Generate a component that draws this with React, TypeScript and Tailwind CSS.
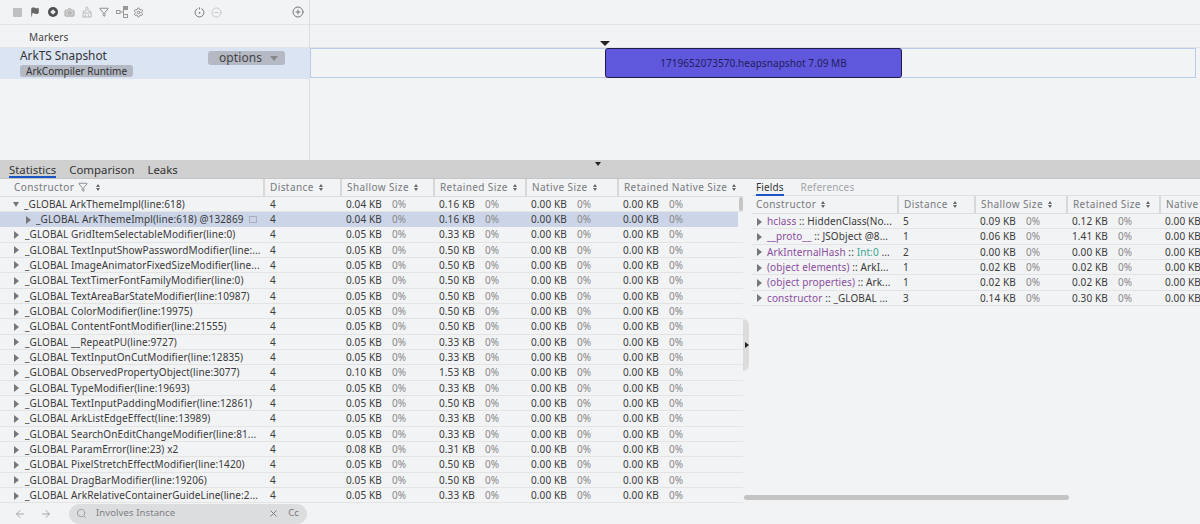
import React from 'react';
import { Camera, CirclePlus, CircleMinus, Funnel, Settings, Search, X, ArrowLeft, ArrowRight, Flag, BrushCleaning } from 'lucide-react';

const leftRows: [string, string, string][] = [
  ['_GLOBAL GridItemSelectableModifier(line:0)', '0.05', '0.33'],
  ['_GLOBAL TextInputShowPasswordModifier(line:...', '0.05', '0.50'],
  ['_GLOBAL ImageAnimatorFixedSizeModifier(line...', '0.05', '0.50'],
  ['_GLOBAL TextTimerFontFamilyModifier(line:0)', '0.05', '0.50'],
  ['_GLOBAL TextAreaBarStateModifier(line:10987)', '0.05', '0.50'],
  ['_GLOBAL ColorModifier(line:19975)', '0.05', '0.50'],
  ['_GLOBAL ContentFontModifier(line:21555)', '0.05', '0.50'],
  ['_GLOBAL __RepeatPU(line:9727)', '0.05', '0.33'],
  ['_GLOBAL TextInputOnCutModifier(line:12835)', '0.05', '0.33'],
  ['_GLOBAL ObservedPropertyObject(line:3077)', '0.10', '1.53'],
  ['_GLOBAL TypeModifier(line:19693)', '0.05', '0.33'],
  ['_GLOBAL TextInputPaddingModifier(line:12861)', '0.05', '0.50'],
  ['_GLOBAL ArkListEdgeEffect(line:13989)', '0.05', '0.33'],
  ['_GLOBAL SearchOnEditChangeModifier(line:81...', '0.05', '0.33'],
  ['_GLOBAL ParamError(line:23) x2', '0.08', '0.31'],
  ['_GLOBAL PixelStretchEffectModifier(line:1420)', '0.05', '0.50'],
  ['_GLOBAL DragBarModifier(line:19206)', '0.05', '0.50'],
  ['_GLOBAL ArkRelativeContainerGuideLine(line:2...', '0.05', '0.33'],
];

const fieldRows = [
  { name: 'hclass', rest: ' :: HiddenClass(No...', dist: '5', shallow: '0.09', retained: '0.12' },
  { name: '__proto__', rest: ' :: JSObject @8...', dist: '1', shallow: '0.06', retained: '1.41' },
  { name: 'ArkInternalHash', rest: ' :: ', teal: 'Int:0', tail: ' ...', dist: '2', shallow: '0.00', retained: '0.00' },
  { name: '(object elements)', rest: ' :: ArkI...', dist: '1', shallow: '0.02', retained: '0.02' },
  { name: '(object properties)', rest: ' :: Ark...', dist: '1', shallow: '0.02', retained: '0.02' },
  { name: 'constructor', rest: ' :: _GLOBAL ...', dist: '3', shallow: '0.14', retained: '0.30' },
];

const leftCols = 'grid grid-cols-[263px_77px_93px_92px_92px_124px]';
const rightCols = 'grid grid-cols-[145px_77px_92px_93px_60px]';

const Arrow = ({ open = false }: { open?: boolean }) => (
  <span
    className={
      open
        ? 'w-0 h-0 border-x-[3.5px] border-x-transparent border-t-[5px] border-t-[#777] shrink-0'
        : 'w-0 h-0 border-y-[4px] border-y-transparent border-l-[5px] border-l-[#777] shrink-0'
    }
  />
);

const Sort = () => (
  <span className="inline-flex flex-col gap-[1px] ml-[5px] align-middle">
    <span className="w-0 h-0 border-x-[2.5px] border-x-transparent border-b-[3px] border-b-[#666]" />
    <span className="w-0 h-0 border-x-[2.5px] border-x-transparent border-t-[3px] border-t-[#666]" />
  </span>
);

const HeadCell = ({ label }: { label: string }) => (
  <div className="flex items-center pl-[5px] border-l-2 border-[#d8d8d8] text-[#77797d] tracking-[0.4px] whitespace-nowrap overflow-hidden">
    {label}
    <Sort />
  </div>
);

const Size = ({ kb }: { kb: string }) => (
  <div className="flex pl-[6px] whitespace-nowrap">
    <span className="w-[37px]">{kb} KB</span>
    <span className="ml-[9px] text-[#888]">0%</span>
  </div>
);

// circular refresh-like record icon
const RecordTimer = () => (
  <svg width="11" height="11" viewBox="0 0 11 11" fill="none" className="ml-[50px] text-[#777]" stroke="currentColor">
    <path d="M3.6 1.6a4.4 4.4 0 1 0 3.8 0" strokeWidth="1" />
    <path d="M5.5 0.4v2" strokeWidth="1" />
    <circle cx="5.5" cy="5.8" r="0.9" fill="currentColor" stroke="none" />
  </svg>
);

// box with a bracket going to two nodes
const TreeIcon = () => (
  <svg width="12" height="12" viewBox="0 0 12 12" fill="none" className="ml-[7px] text-[#999]" stroke="currentColor">
    <rect x="0.5" y="4.5" width="3.5" height="3" />
    <path d="M4 6h3.5M7.5 2.5v7" />
    <rect x="7.5" y="0.5" width="4" height="3" fill="currentColor" />
    <rect x="7.5" y="8.5" width="4" height="3" />
  </svg>
);

export default function App() {
  return (
    <div
      className="w-[1200px] h-[524px] overflow-hidden bg-[#f2f3f5] text-[#3a3a3a] text-[10px] tracking-[0.1px] flex flex-col"
      style={{ fontFamily: '"Noto Sans", "Open Sans", sans-serif' }}
    >
      {/* top session area */}
      <div className="h-[160px] shrink-0 flex flex-col">
        <div className="h-[25px] shrink-0 flex border-b border-[#e2e3e5]">
          <div className="w-[310px] shrink-0 flex items-center pl-[13px] border-r border-[#dcdde0]">
            <span className="w-[9px] h-[9px] rounded-[1px] bg-[#bdbfc2]" />
            <Flag size={10} className="ml-[8px] text-[#666] fill-[#666]" />
            <span className="ml-[8px] w-[10px] h-[10px] rounded-full bg-[#4c4e52] flex items-center justify-center">
              <span className="w-[4px] h-[4px] rotate-45 bg-[#e8e8e8]" />
            </span>
            <Camera size={11} className="ml-[6px] text-[#aaa] fill-[#ccc]" />
            <BrushCleaning size={12} className="ml-[6px] text-[#bbb]" />
            <Funnel size={10} className="ml-[6px] text-[#777]" />
            <TreeIcon />
            <Settings size={11} className="ml-[5px] text-[#888]" />
            <RecordTimer />
            <CircleMinus size={11} className="ml-[6px] text-[#c4c5c8]" />
            <CirclePlus size={12} className="ml-[70px] text-[#777]" />
          </div>
          <div className="flex-1" />
        </div>
        <div className="h-[23px] shrink-0 flex border-b border-[#e2e3e5]">
          <div className="w-[310px] shrink-0 pl-[29px] pt-[2px] flex items-center border-r border-[#dcdde0] text-[#444]">Markers</div>
          <div className="flex-1" />
        </div>
        <div className="h-[31px] shrink-0 flex">
          <div className="w-[310px] shrink-0 bg-[#dbe4f3] pl-[20px] flex">
            <div className="flex-1">
              <div className="text-[11.8px] leading-[15px] text-[#333] tracking-normal">ArkTS Snapshot</div>
              <div className="mt-[2px] w-fit h-[12px] px-[6px] rounded-[3px] bg-[#b4b9c4] leading-[12px] text-[10px] tracking-normal text-[#333]">ArkCompiler Runtime</div>
            </div>
            <div className="mt-[3px] mr-[25px] w-[77px] h-[14px] rounded-[3px] bg-[#b4b9c4] flex items-center pl-[11px] text-[12px] text-[#444]">
              options
              <span className="ml-[8px] w-0 h-0 border-x-[4px] border-x-transparent border-t-[5px] border-t-[#888]" />
            </div>
          </div>
          <div className="flex-1 relative flex items-center border border-[#b9cbe6] mr-[4px] mb-[1px]">
            <div className="ml-[294px] w-[297px] h-[30px] shrink-0 rounded-[3px] bg-[#5f58dc] border border-[#1d1b4d] flex items-center justify-center text-[#1f1d5c] tracking-[0.06px]">
              1719652073570.heapsnapshot 7.09 MB
            </div>
            <span className="absolute left-[289px] -top-[8px] w-0 h-0 border-x-[5px] border-x-transparent border-t-[5px] border-t-[#222]" />
          </div>
        </div>
        <div className="flex-1 flex">
          <div className="w-[310px] border-r border-[#dcdde0]" />
        </div>
      </div>

      {/* tabs bar */}
      <div className="h-[19px] shrink-0 relative flex items-end pl-[9px] gap-[13px] bg-[#d0d0d0] text-[11.4px] tracking-normal text-[#333] border-b border-[#c4c4c4]">
        <div className="h-[18px] leading-[19px] border-b-2 border-[#1a56c4]">Statistics</div>
        <div className="h-[18px] leading-[19px]">Comparison</div>
        <div className="h-[18px] leading-[19px]">Leaks</div>
        <span className="absolute left-[595px] top-[2px] w-0 h-0 border-x-[3.5px] border-x-transparent border-t-[4px] border-t-[#222]" />
      </div>

      <div className="flex-1 min-h-0 flex">
        {/* left table */}
        <div className="w-[743px] shrink-0 flex flex-col relative overflow-hidden">
          <div className={`${leftCols} h-[17.6px] shrink-0 border-b border-[#dddddd] leading-[16px]`}>
            <div className="flex items-center pl-[14px] text-[#77797d] tracking-[0.4px]">
              Constructor
              <Funnel size={10} className="ml-[4px]" />
              <span className="ml-[3px] flex"><Sort /></span>
            </div>
            <HeadCell label="Distance" />
            <HeadCell label="Shallow Size" />
            <HeadCell label="Retained Size" />
            <HeadCell label="Native Size" />
            <HeadCell label="Retained Native Size" />
          </div>
          <div className={`${leftCols} h-[15.35px] shrink-0 items-center border-b border-[#e4e4e4]`}>
            <div className="flex items-center pl-[13px] gap-[5px]"><Arrow open /><span className="truncate">_GLOBAL ArkThemeImpl(line:618)</span></div>
            <div className="pl-[7px]">4</div>
            <Size kb="0.04" />
            <Size kb="0.16" />
            <Size kb="0.00" />
            <Size kb="0.00" />
          </div>
          <div className={`${leftCols} h-[15.35px] shrink-0 items-center bg-[#ccd5e8] mr-[3px] ml-[2px] -translate-x-[2px]`}>
            <div className="flex items-center pl-[26px] gap-[5px] whitespace-nowrap">
              <Arrow />
              <span>_GLOBAL ArkThemeImpl(line:618) @132869</span>
              <span className="w-[8px] h-[7px] border border-[#aab0bd]" />
            </div>
            <div className="pl-[7px]">4</div>
            <Size kb="0.04" />
            <Size kb="0.16" />
            <Size kb="0.00" />
            <Size kb="0.00" />
          </div>
          {leftRows.map(([name, shallow, retained]) => (
            <div key={name} className={`${leftCols} h-[15.35px] shrink-0 items-center border-b border-[#e4e4e4]`}>
              <div className="flex items-center pl-[14px] gap-[6px] whitespace-nowrap overflow-hidden">
                <Arrow />
                <span>{name}</span>
              </div>
              <div className="pl-[7px]">4</div>
              <Size kb={shallow} />
              <Size kb={retained} />
              <Size kb="0.00" />
              <Size kb="0.00" />
            </div>
          ))}
          {/* scrollbar thumb */}
          <span className="absolute left-[739px] top-[18px] w-[4px] h-[14px] rounded-[2px] bg-[#c6c6c6]" />
          {/* bottom search bar */}
          <div className="absolute left-0 right-0 bottom-0 h-[21px] bg-[#f2f3f5] flex items-center pl-[14px] text-[#a5a7aa]">
            <ArrowLeft size={12} />
            <ArrowRight size={12} className="ml-[14px]" />
            <div className="ml-[17px] w-[238px] h-[20px] rounded-full bg-[#dcdddf] flex items-center pl-[7px] text-[#7d7f83] text-[9.5px]">
              <Search size={11} className="text-[#9a9c9f]" />
              <span className="ml-[9px] flex-1 tracking-[0.1px]">Involves Instance</span>
              <X size={11} className="text-[#777]" />
              <span className="ml-[9px] mr-[8px] text-[#777]">Cc</span>
            </div>
          </div>
        </div>

        {/* right panel */}
        <div className="flex-1 min-w-0 flex flex-col relative pl-[9px] overflow-hidden">
          <div className="h-[17px] shrink-0 flex items-center pl-[4px] gap-[17px] border-b border-[#e0e0e0]">
            <span className="h-[17px] leading-[16px] border-b-2 border-[#1a56c4] text-[#333]">Fields</span>
            <span className="text-[#a3a5a8] tracking-[0.2px]">References</span>
          </div>
          <div className={`${rightCols} h-[18px] shrink-0 border-b border-[#dddddd] leading-[17px]`}>
            <div className="flex items-center pl-[4px] text-[#77797d] tracking-[0.4px]">
              Constructor
              <Sort />
            </div>
            <HeadCell label="Distance" />
            <HeadCell label="Shallow Size" />
            <HeadCell label="Retained Size" />
            <div className="flex items-center pl-[5px] border-l-2 border-[#d8d8d8] text-[#77797d] tracking-[0.4px]">Native</div>
          </div>
          {fieldRows.map((r) => (
            <div key={r.name} className={`${rightCols} h-[15.35px] shrink-0 items-center border-b border-[#e4e4e4]`}>
              <div className="flex items-center pl-[5px] gap-[5px] whitespace-nowrap overflow-hidden">
                <Arrow />
                <span>
                  <span className="text-[#8a4d9e]">{r.name}</span>
                  {r.rest}
                  {r.teal && <span className="text-[#3aa88f]">{r.teal}</span>}
                  {r.tail}
                </span>
              </div>
              <div className="pl-[6px]">{r.dist}</div>
              <Size kb={r.shallow} />
              <Size kb={r.retained} />
              <div className="pl-[6px] whitespace-nowrap">0.00 KB</div>
            </div>
          ))}
          {/* collapse handle */}
          <div className="absolute left-0 top-[140px] w-[6px] h-[52px] rounded-r-[6px] bg-[#dcdcdc] flex items-center">
            <span className="ml-[2px] w-0 h-0 border-y-[3px] border-y-transparent border-l-[4px] border-l-[#222]" />
          </div>
          {/* horizontal scrollbar */}
          <div className="absolute left-[1px] bottom-[24px] w-[325px] h-[5px] rounded-[3px] bg-[#c4c4c4]" />
        </div>
      </div>
    </div>
  );
}
